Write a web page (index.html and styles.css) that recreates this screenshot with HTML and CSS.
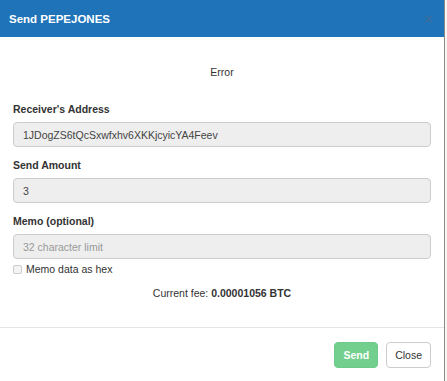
FILE: index.html
```html
<!DOCTYPE html>
<html lang="en">
<head>
    <meta charset="UTF-8">
    <title>Send PEPEJONES</title>
    <link rel="stylesheet" href="styles.css">
</head>
<body>

    <div class="modal">
        <div class="modal-header">
            <h4>Send PEPEJONES</h4>
            <span class="close">&times;</span>
        </div>

        <div class="modal-body">
            <p class="status">Error</p>

            <label>Receiver's Address</label>
            <input class="field" value="1JDogZS6tQcSxwfxhv6XKKjcyicYA4Feev" readonly />

            <label>Send Amount</label>
            <input class="field" value="3" readonly />

            <label>Memo (optional)</label>
            <input class="field" placeholder="32 character limit" readonly />

            <div class="check">
                <span class="box"></span>
                <span>Memo data as hex</span>
            </div>

            <p class="fee">Current fee: <b>0.00001056 BTC</b></p>
        </div>

        <div class="modal-footer">
            <button class="btn btn-send">Send</button>
            <button class="btn btn-close">Close</button>
        </div>
    </div>

</body>
</html>
```

FILE: styles.css
```css
body {
    margin: 0;
    font-family: "Liberation Sans", Arial, sans-serif;
    font-size: 10.5px;
    line-height: 12px;
    color: #333;
    background-color: #f6f6f4;
    height: 381px;
    overflow: hidden;
}

.modal {
    width: 445px;
    height: 381px;
    background-color: #fff;
    border-right: 1px solid #8c8c84;
    box-sizing: border-box;
}

.modal-header {
    height: 37px;
    background-color: #1f73b9;
    display: flex;
    align-items: center;
    justify-content: space-between;
    padding: 0 11px 0 9px;
}

.modal-header h4 {
    margin: 0;
    color: #fff;
    font-size: 11.5px;
    font-weight: bold;
}

.close {
    color: #3f6f9c;
    font-size: 15px;
    font-weight: bold;
    opacity: 0.8;
}

.modal-body {
    padding: 0 13px;
    height: 290px;
    border-bottom: 1px solid #e5e5e5;
    display: flex;
    flex-direction: column;
}

.status {
    text-align: center;
    margin: 29px 0 25px;
}

label {
    font-weight: bold;
    margin-bottom: 7px;
}

.field {
    height: 25px;
    box-sizing: border-box;
    padding: 0 9px;
    margin-bottom: 12px;
    border: 1px solid #ccc;
    border-radius: 4px;
    background-color: #eee;
    font-family: "Liberation Sans", Arial, sans-serif;
    font-size: 10.5px;
    color: #444;
}

.field::placeholder {
    color: #999;
}

.check {
    display: flex;
    align-items: center;
    gap: 4px;
    margin-top: -8px;
}

.box {
    width: 7px;
    height: 7px;
    border: 1px solid #ccc;
    border-radius: 2px;
    background-color: #f4f4f4;
}

.fee {
    text-align: center;
    margin: 12px 0 0;
}

.modal-footer {
    display: flex;
    justify-content: flex-end;
    gap: 8px;
    padding: 14px 13px 0;
}

.btn {
    height: 26px;
    padding: 0 8px;
    border-radius: 4px;
    font-family: "Liberation Sans", Arial, sans-serif;
    font-size: 10.5px;
}

.btn-send {
    background-color: #72cf8e;
    border: 1px solid #6cc989;
    color: #fff;
    font-weight: bold;
}

.btn-close {
    background-color: #fff;
    border: 1px solid #ccc;
    color: #333;
}
```
